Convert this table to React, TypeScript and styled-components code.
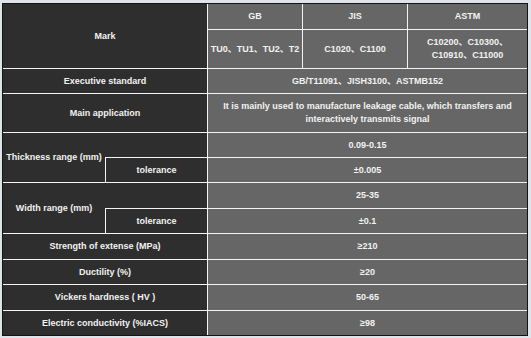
import React from 'react';
import styled, {createGlobalStyle} from 'styled-components';

const GlobalStyle = createGlobalStyle`
  html, body {
    margin: 0;
    padding: 0;
    background: #dfe4ea;
  }
  body {
    font-family: "Liberation Sans", "Noto Sans CJK SC", sans-serif;
  }
`;

const Page = styled.div`
  width: 531px;
  height: 338px;
  padding: 3px 0 0 2px;
  box-sizing: border-box;
  background: #dfe4ea;
`;

const Table = styled.div`
  width: 526px;
  border: 1px solid #141414;
  box-sizing: border-box;
  display: grid;
  grid-template-columns: 204px 94px 104px 119px;
  grid-template-rows: 25px 38px 24px 38px 49px 50px 25px 24px 25px 24px;
  gap: 1px;
  background: #f4f4f4;
`;

interface CellProps {
  $dark?: boolean;
  $col?: string;
  $row?: string;
}

const Cell = styled.div<CellProps>`
  display: flex;
  align-items: center;
  justify-content: center;
  text-align: center;
  background: ${p => (p.$dark ? '#2f2e2e' : '#666666')};
  color: #f2f2f2;
  font-size: 9px;
  font-weight: bold;
  line-height: 13px;
  grid-column: ${p => p.$col || 'auto'};
  grid-row: ${p => p.$row || 'auto'};
`;

const SplitLabel = styled.div`
  display: grid;
  grid-template-columns: 102px 102px;
  grid-template-rows: 1fr 25px;
  background: #2f2e2e;
  color: #f2f2f2;
  font-size: 9px;
  font-weight: bold;
`;

const RangeName = styled.div`
  grid-column: 1;
  grid-row: 1 / span 2;
  display: flex;
  align-items: center;
  justify-content: center;
  padding-bottom: 1px;
`;

const SubName = styled.div`
  grid-column: 2;
  grid-row: 2;
  display: flex;
  align-items: center;
  justify-content: center;
  border-top: 1px solid #f4f4f4;
  border-left: 1px solid #f4f4f4;
`;

const ValueStack = styled.div`
  display: grid;
  grid-column: 2 / span 3;
  gap: 1px;
  background: #f4f4f4;
`;

interface RangeProps {
  name: string;
  value: string;
  tolerance: string;
  top: number;
}

const RangeBlock = ({name, value, tolerance, top}: RangeProps) => (
  <>
    <SplitLabel>
      <RangeName>{name}</RangeName>
      <SubName>tolerance</SubName>
    </SplitLabel>
    <ValueStack style={{gridTemplateRows: `${top}px 24px`}}>
      <Cell>{value}</Cell>
      <Cell>{tolerance}</Cell>
    </ValueStack>
  </>
);

const rows: [string, string][] = [
  ['Strength of extense (MPa)', '≥210'],
  ['Ductility (%)', '≥20'],
  ['Vickers hardness ( HV )', '50-65'],
  ['Electric conductivity (%IACS)', '≥98'],
];

const App = () => (
  <Page>
    <GlobalStyle/>
    <Table>
      <Cell $dark $row="1 / span 2">Mark</Cell>
      <Cell>GB</Cell>
      <Cell>JIS</Cell>
      <Cell>ASTM</Cell>
      <Cell>TU0、TU1、TU2、T2</Cell>
      <Cell>C1020、C1100</Cell>
      <Cell>C10200、C10300、<br/>C10910、C11000</Cell>

      <Cell $dark>Executive standard</Cell>
      <Cell $col="2 / span 3">GB/T11091、JISH3100、ASTMB152</Cell>

      <Cell $dark>Main application</Cell>
      <Cell $col="2 / span 3">
        It is mainly used to manufacture leakage cable, which transfers and<br/>
        interactively transmits signal
      </Cell>

      <RangeBlock name="Thickness range (mm)" value="0.09-0.15" tolerance="±0.005" top={24}/>
      <RangeBlock name="Width range (mm)" value="25-35" tolerance="±0.1" top={25}/>

      {rows.map(([name, value]) => (
        <React.Fragment key={name}>
          <Cell $dark>{name}</Cell>
          <Cell $col="2 / span 3">{value}</Cell>
        </React.Fragment>
      ))}
    </Table>
  </Page>
);

export default App;
